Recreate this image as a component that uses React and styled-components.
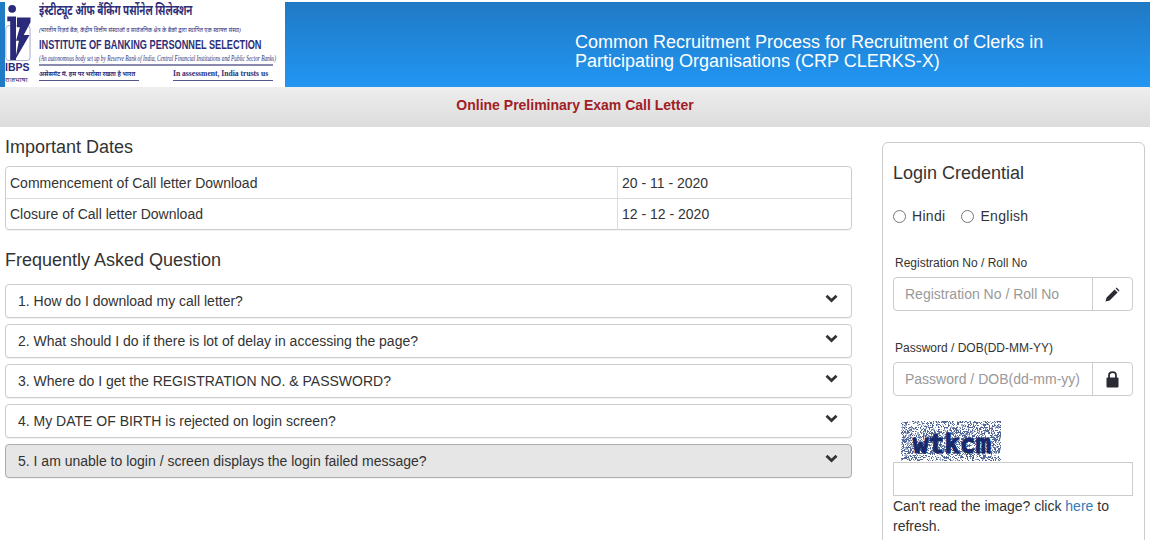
import styled, { createGlobalStyle } from "styled-components";

const faqList = [
	"1. How do I download my call letter?",
	"2. What should I do if there is lot of delay in accessing the page?",
	"3. Where do I get the REGISTRATION NO. & PASSWORD?",
	"4. My DATE OF BIRTH is rejected on login screen?",
	"5. I am unable to login / screen displays the login failed message?",
];

const dates = [
	{ label: "Commencement of Call letter Download", value: "20 - 11 - 2020" },
	{ label: "Closure of Call letter Download", value: "12 - 12 - 2020" },
];

// captcha noise, same dots on every render
const noise = [];
let seed = 7;
for (let y = 0; y < 40; y += 1) {
	for (let x = 0; x < 100; x += 1) {
		seed = (seed * 16807) % 2147483647;
		const dense = y % 5 === 1 || (y > 8 && y < 33);
		if (seed % 100 < (dense ? 58 : 38)) noise.push([x, y, seed % 3 === 0 ? "#a3aec8" : "#4f6596"]);
	}
}

const GlobalStyle = createGlobalStyle`
	html, body {
		margin: 0;
		padding: 0;
		background: #fff;
		overflow: hidden;
	}
	body {
		font-family: "Liberation Sans", Arial, sans-serif;
		font-size: 14px;
		color: #333;
	}
`;

const Page = styled.div`
	width: 1150px;
	height: 540px;
	overflow: hidden;
`;

const Header = styled.header`
	display: flex;
	height: 87px;
	box-sizing: border-box;
	padding-top: 2px;
	background: #fff;
`;

const Logo = styled.div`
	width: 285px;
	height: 85px;
	flex: none;
	display: flex;
	background: #fff;
	overflow: hidden;
`;

const LogoMark = styled.div`
	width: 36px;
	flex: none;
	color: #2a2a7a;
	display: flex;
	flex-direction: column;
	align-items: flex-start;
	background: linear-gradient(to right, #1f7bc6 0 5px, #fff 5px);
`;

const LogoMarkName = styled.span`
	font-size: 10.5px;
	font-weight: bold;
	line-height: 10px;
	margin: 0 0 0 5px;
`;

const LogoMarkSub = styled.span`
	font-size: 7px;
	line-height: 9px;
	margin: 3px 0 0 5px;
	font-family: "Noto Sans", "Liberation Sans", sans-serif;
`;

const LogoText = styled.div`
	padding-left: 3px;
	width: 240px;
	color: #2e2e78;
	white-space: nowrap;
`;

const LogoHindi = styled.div`
	font-size: 13.5px;
	line-height: 17px;
	font-weight: bold;
	height: 17px;
	font-family: "Noto Sans", "Liberation Sans", sans-serif;
	transform: scaleX(0.73);
	transform-origin: left;
`;

const LogoHindiSmall = styled.div`
	font-size: 6px;
	line-height: 8px;
	height: 8px;
	margin-top: 7px;
	font-style: italic;
	font-family: "Noto Sans", "Liberation Sans", sans-serif;
	transform: scaleX(0.93);
	transform-origin: left;
`;

const LogoName = styled.div`
	font-size: 12.4px;
	line-height: 14px;
	font-weight: bold;
	margin-top: 4px;
	transform: scaleX(0.74);
	transform-origin: left;
`;

const LogoNote = styled.div`
	font-family: "Liberation Serif", serif;
	font-style: italic;
	font-size: 7.6px;
	line-height: 9px;
	margin-top: 2px;
	width: 234px;
	transform: scaleX(0.7);
	transform-origin: left;
`;

const LogoRule = styled.div`
	width: 234px;
	height: 2px;
	margin-top: 1px;
	background: #8a8ab0;
`;

const LogoFooter = styled.div`
	display: flex;
	justify-content: space-between;
	width: 234px;
	margin-top: 3px;
	line-height: 10px;
	font-weight: bold;
`;

const LogoTag = styled.span`
	font-family: ${(p) => (p.$serif ? '"Liberation Serif", serif' : '"Noto Sans", sans-serif')};
	font-size: ${(p) => (p.$serif ? 7.6 : 6)}px;
	width: 100px;
	padding-bottom: 1px;
	border-bottom: 1px solid #55558f;
`;

const Banner = styled.div`
	flex: 1;
	height: 85px;
	display: flex;
	align-items: center;
	padding: 14px 0 0 290px;
	box-sizing: border-box;
	background: linear-gradient(to bottom, #2079c4, #2196f3);
	color: #fff;
	font-size: 18px;
	line-height: 19px;
`;

const SubHeader = styled.div`
	height: 40px;
	display: flex;
	align-items: center;
	justify-content: center;
	background: linear-gradient(to bottom, #eeeeee, #dcdcdc);
	color: #a12024;
	font-size: 14px;
	font-weight: bold;
	padding-bottom: 5px;
	box-sizing: border-box;
`;

const Content = styled.main`
	display: flex;
	align-items: flex-start;
	padding: 0 5px;
`;

const LeftColumn = styled.section`
	width: 847px;
	flex: none;
`;

const SectionTitle = styled.h3`
	margin: 0;
	font-size: 18px;
	font-weight: normal;
	line-height: 20px;
	color: #333;
	padding-top: ${(p) => p.$top || 0}px;
`;

const DatesTable = styled.div`
	margin-top: 9px;
	border: 1px solid #ccc;
	border-radius: 4px;
	box-shadow: 0 1px 1px rgba(0, 0, 0, 0.05);
`;

const DateRow = styled.div`
	display: grid;
	grid-template-columns: 611px 1fr;
	height: 31px;
	line-height: 33px;
	& + & {
		height: 30px;
		line-height: 31px;
		border-top: 1px solid #ddd;
	}
`;

const DateCell = styled.div`
	padding-left: 4px;
	font-size: 14px;
	color: #333;
	& + & {
		border-left: 1px solid #ddd;
	}
`;

const FaqList = styled.div`
	margin-top: 14px;
	display: flex;
	flex-direction: column;
	gap: 6px;
`;

const FaqItem = styled.div`
	height: 34px;
	box-sizing: border-box;
	display: flex;
	align-items: center;
	justify-content: space-between;
	padding: 0 13px 0 12px;
	border: 1px solid ${(p) => (p.$active ? "#adadad" : "#ccc")};
	border-radius: 4px;
	background: ${(p) => (p.$active ? "#e6e6e6" : "#fff")};
	font-size: 14px;
	color: #333;
	box-shadow: 0 1px 1px rgba(0, 0, 0, 0.05);
	svg {
		margin-top: -5px;
	}
`;

const LoginPanel = styled.aside`
	width: 263px;
	height: 420px;
	box-sizing: border-box;
	flex: none;
	margin: 15px 0 0 30px;
	padding: 20px 11px 0 10px;
	border: 1px solid #ccc;
	border-radius: 6px;
`;

const RadioRow = styled.div`
	display: flex;
	align-items: center;
	margin-top: 23px;
	gap: 10px;
	height: 20px;
`;

const RadioLabel = styled.label`
	display: flex;
	align-items: center;
	gap: 6px;
	font-size: 14px;
	letter-spacing: 0.3px;
	margin-right: 6px;
`;

const Radio = styled.span`
	width: 11px;
	height: 11px;
	border: 1px solid #767676;
	border-radius: 50%;
	background: #fff;
`;

const FieldLabel = styled.div`
	font-size: 12px;
	line-height: 14px;
	margin: ${(p) => p.$top}px 0 0 2px;
	color: #333;
`;

const InputGroup = styled.div`
	display: flex;
	height: 34px;
	margin-top: 7px;
	border: 1px solid #ccc;
	border-radius: 4px;
	box-sizing: border-box;
`;

const Placeholder = styled.div`
	flex: 1;
	padding-left: 11px;
	line-height: 32px;
	font-size: 14px;
	color: #999;
	white-space: nowrap;
	overflow: hidden;
`;

const Addon = styled.div`
	width: 39px;
	flex: none;
	display: flex;
	align-items: center;
	justify-content: center;
	border-left: 1px solid #ccc;
	color: #2b2b33;
`;

const Captcha = styled.svg`
	display: block;
	margin: 25px 0 1px 8px;
`;

const CaptchaInput = styled.div`
	height: 34px;
	box-sizing: border-box;
	border: 1px solid #ccc;
`;

const HelpText = styled.p`
	margin: 0;
	font-size: 14px;
	line-height: 20px;
	color: #333;
	a {
		color: #337ab7;
		text-decoration: none;
	}
`;

const ChevronIcon = () => (
	<svg width="13" height="9" viewBox="0 0 13 9">
		<path d="M1.5 1.8 6.5 6.5 11.5 1.8" fill="none" stroke="currentColor" strokeWidth="2.8" />
	</svg>
);

const PencilIcon = () => (
	<svg width="15" height="15" viewBox="0 0 15 15">
		<path d="M0.5 14.5 1.6 10.4 9.6 2.4 12.6 5.4 4.6 13.4zM10.6 1.4 11.6 0.5 14.5 3.4 13.6 4.4z" fill="currentColor" />
	</svg>
);

const LockIcon = () => (
	<svg width="13" height="17" viewBox="0 0 13 17">
		<path d="M3 7V4.5C3 2.6 4.4 1.2 6.5 1.2S10 2.6 10 4.5V7" fill="none" stroke="currentColor" strokeWidth="1.8" />
		<rect x="0.5" y="6.5" width="12" height="10" rx="1" fill="currentColor" />
	</svg>
);

const App = () => {
	return (
		<Page>
			<GlobalStyle />
			<Header>
				<Logo>
					<LogoMark>
						<svg width="32" height="60" viewBox="0 0 32 62">
							<rect x="5.5" y="24.5" width="25" height="36" rx="3" fill="none" stroke="#a5a5c6" strokeWidth="1" />
							<circle cx="12" cy="7" r="4" fill="#2a2a7a" />
							<path d="M7 15h9v45h-6V20H7z" fill="#2a2a7a" />
							<path d="M17 16h14v5l-7 13h6L15 60l4-20h-3l4-14h-3z" fill="#2a2a7a" />
						</svg>
						<LogoMarkName>IBPS</LogoMarkName>
						<LogoMarkSub>राजभाषा</LogoMarkSub>
					</LogoMark>
					<LogoText>
						<LogoHindi>इंस्टीट्यूट ऑफ बैंकिंग पर्सोनेल सिलेक्शन</LogoHindi>
						<LogoHindiSmall>(भारतीय रिज़र्व बैंक, केंद्रीय वित्तीय संस्थाओं व सार्वजनिक क्षेत्र के बैंकों द्वारा स्थापित एक स्वायत्त संस्था)</LogoHindiSmall>
						<LogoName>INSTITUTE OF BANKING PERSONNEL SELECTION</LogoName>
						<LogoNote>(An autonomous body set up by Reserve Bank of India, Central Financial Institutions and Public Sector Banks)</LogoNote>
						<LogoRule />
						<LogoFooter>
							<LogoTag>असेसमेंट में, हम पर भरोसा रखता है भारत</LogoTag>
							<LogoTag $serif>In assessment, India trusts us</LogoTag>
						</LogoFooter>
					</LogoText>
				</Logo>
				<Banner>
					<div>
						Common Recruitment Process for Recruitment of Clerks in
						<br />
						Participating Organisations (CRP CLERKS-X)
					</div>
				</Banner>
			</Header>
			<SubHeader>Online Preliminary Exam Call Letter</SubHeader>
			<Content>
				<LeftColumn>
					<SectionTitle $top={10}>Important Dates</SectionTitle>
					<DatesTable>
						{dates.map((row) => (
							<DateRow key={row.label}>
								<DateCell>{row.label}</DateCell>
								<DateCell>{row.value}</DateCell>
							</DateRow>
						))}
					</DatesTable>
					<SectionTitle $top={20}>Frequently Asked Question</SectionTitle>
					<FaqList>
						{faqList.map((question, index) => (
							<FaqItem key={question} $active={index === faqList.length - 1}>
								<span>{question}</span>
								<ChevronIcon />
							</FaqItem>
						))}
					</FaqList>
				</LeftColumn>
				<LoginPanel>
					<SectionTitle>Login Credential</SectionTitle>
					<RadioRow>
						<RadioLabel>
							<Radio />
							Hindi
						</RadioLabel>
						<RadioLabel>
							<Radio />
							English
						</RadioLabel>
					</RadioRow>
					<FieldLabel $top={30}>Registration No / Roll No</FieldLabel>
					<InputGroup>
						<Placeholder>Registration No / Roll No</Placeholder>
						<Addon>
							<PencilIcon />
						</Addon>
					</InputGroup>
					<FieldLabel $top={30}>Password / DOB(DD-MM-YY)</FieldLabel>
					<InputGroup>
						<Placeholder>Password / DOB(dd-mm-yy)</Placeholder>
						<Addon>
							<LockIcon />
						</Addon>
					</InputGroup>
					<Captcha width="100" height="40" viewBox="0 0 100 40">
						{noise.map(([x, y, fill]) => (
							<rect key={`${x}-${y}`} x={x} y={y} width="1" height="1" fill={fill} />
						))}
						<text
							x="51"
							y="32"
							textAnchor="middle"
							fontFamily="DejaVu Sans Mono, monospace"
							fontSize="26"
							fontWeight="bold"
							fill="#17296b"
							stroke="#17296b"
							strokeWidth="0.9"
						>
							wtkcm
						</text>
					</Captcha>
					<CaptchaInput />
					<HelpText>
						Can't read the image? click <a href="#refresh">here</a> to refresh.
					</HelpText>
				</LoginPanel>
			</Content>
		</Page>
	);
};

export default App;
